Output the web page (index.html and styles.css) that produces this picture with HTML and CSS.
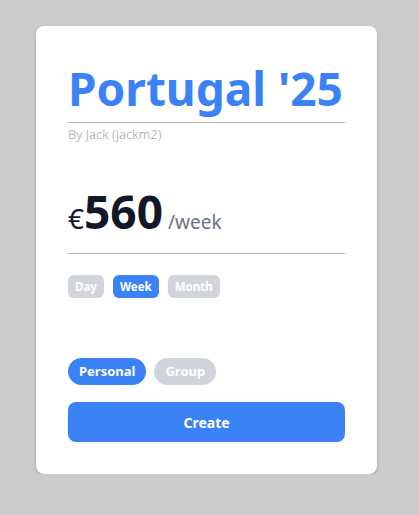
FILE: index.html
```html
<!DOCTYPE html>
<html>
<head>
<meta charset="utf-8">
<link rel="stylesheet" href="styles.css">
</head>
<body>
<div class="card">
  <h1 class="title">Portugal '25</h1>
  <div class="byline">By Jack (jackm2)</div>
  <div class="price">
    <span class="currency">€</span><span class="amount">560</span><span class="period">/week</span>
  </div>
  <div class="periods">
    <span class="chip">Day</span>
    <span class="chip active">Week</span>
    <span class="chip">Month</span>
  </div>
  <div class="types">
    <span class="pill active">Personal</span>
    <span class="pill">Group</span>
  </div>
  <button class="create">Create</button>
</div>
</body>
</html>
```
FILE: styles.css
```css
html, body {
  margin: 0;
  padding: 0;
  background: #cccccc;
}
body {
  padding-top: 26px;
  font-family: "Noto Sans", "Open Sans", sans-serif;
}
.card {
  box-sizing: border-box;
  width: 341px;
  margin-left: 36px;
  background: #ffffff;
  border-radius: 8px;
  padding: 32px;
  box-shadow: 0 1px 3px rgba(0,0,0,0.25);
}
.title {
  margin: 0;
  font-size: 46px;
  line-height: 60px;
  font-weight: 700;
  color: #3b82f6;
  padding-bottom: 4px;
  border-bottom: 1px solid #b8b8bc;
}
.byline {
  margin-top: 2px;
  font-size: 13px;
  line-height: 18px;
  font-weight: 300;
  color: #9ca3af;
}
.price {
  margin-top: 40px;
  padding-bottom: 3px;
  border-bottom: 1px solid #b8b8bc;
  display: flex;
  align-items: baseline;
  color: #111827;
  line-height: 56px;
}
.currency {
  font-size: 28px;
}
.amount {
  font-size: 46px;
  font-weight: 700;
}
.period {
  font-size: 19px;
  color: #6b7280;
  margin-left: 5px;
}
.periods {
  margin-top: 21px;
  display: flex;
  gap: 9px;
}
.chip {
  display: inline-block;
  padding: 0 7px;
  height: 23px;
  line-height: 23px;
  font-size: 11.5px;
  font-weight: 700;
  color: #ffffff;
  background: #d1d5db;
  border-radius: 6px;
}
.chip.active, .pill.active {
  background: #3b82f6;
}
.types {
  margin-top: 60px;
  display: flex;
  gap: 8px;
}
.pill {
  display: inline-block;
  padding: 0 11px;
  height: 27px;
  line-height: 27px;
  font-size: 13px;
  font-weight: 700;
  color: #ffffff;
  background: #d1d5db;
  border-radius: 14px;
}
.create {
  display: block;
  width: 100%;
  margin-top: 17px;
  height: 40px;
  border: none;
  border-radius: 8px;
  background: #3b82f6;
  color: #ffffff;
  font-family: inherit;
  font-size: 14px;
  font-weight: 700;
}
```
